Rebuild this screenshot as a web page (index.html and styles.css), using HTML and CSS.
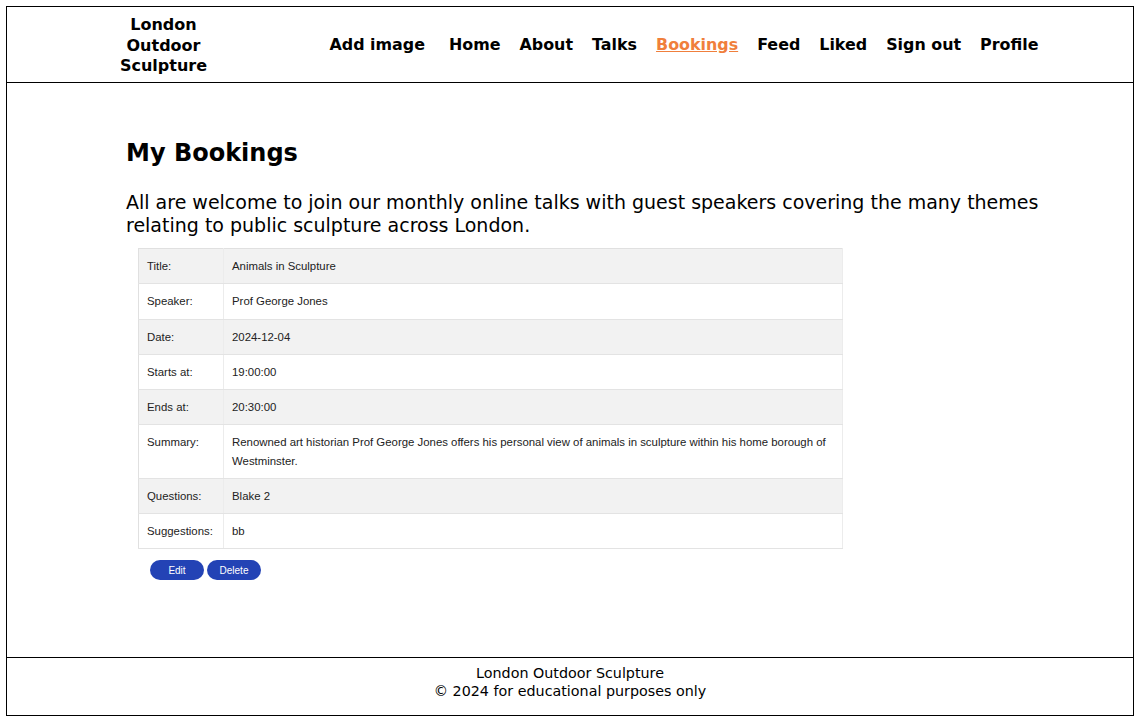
FILE: index.html
```html
<!DOCTYPE html>
<html lang="en">
<head>
<meta charset="utf-8">
<title>My Bookings</title>
<link rel="stylesheet" href="styles.css">
</head>
<body>
<div class="page">
  <header class="site-header">
    <div class="logo">London<br>Outdoor<br>Sculpture</div>
    <nav class="nav">
      <a class="nav-link first" href="#">Add image</a>
      <a class="nav-link" href="#">Home</a>
      <a class="nav-link" href="#">About</a>
      <a class="nav-link" href="#">Talks</a>
      <a class="nav-link active" href="#">Bookings</a>
      <a class="nav-link" href="#">Feed</a>
      <a class="nav-link" href="#">Liked</a>
      <a class="nav-link" href="#">Sign out</a>
      <a class="nav-link" href="#">Profile</a>
    </nav>
  </header>
  <main class="main">
    <h1 class="title">My Bookings</h1>
    <p class="intro">All are welcome to join our monthly online talks with guest speakers covering the many themes relating to public sculpture across London.</p>
    <table class="booking">
      <tr><td class="label">Title:</td><td>Animals in Sculpture</td></tr>
      <tr><td class="label">Speaker:</td><td>Prof George Jones</td></tr>
      <tr><td class="label">Date:</td><td>2024-12-04</td></tr>
      <tr><td class="label">Starts at:</td><td>19:00:00</td></tr>
      <tr><td class="label">Ends at:</td><td>20:30:00</td></tr>
      <tr><td class="label">Summary:</td><td>Renowned art historian Prof George Jones offers his personal view of animals in sculpture within his home borough of Westminster.</td></tr>
      <tr><td class="label">Questions:</td><td>Blake 2</td></tr>
      <tr><td class="label">Suggestions:</td><td>bb</td></tr>
    </table>
    <div class="actions">
      <button class="btn">Edit</button>
      <button class="btn">Delete</button>
    </div>
  </main>
  <footer class="site-footer">
    <div>London Outdoor Sculpture</div>
    <div>&copy; 2024 for educational purposes only</div>
  </footer>
</div>
</body>
</html>
```
FILE: styles.css
```css
html, body {
  margin: 0;
  padding: 0;
  background: #fff;
}
body {
  padding: 6px 10px 6px 6px;
  font-family: "DejaVu Sans", "Noto Sans", sans-serif;
  color: #000;
}
.page {
  width: 1128px;
  height: 710px;
  box-sizing: border-box;
  border: 1px solid #000;
  display: flex;
  flex-direction: column;
}
.site-header {
  display: flex;
  height: 76px;
  box-sizing: border-box;
  border-bottom: 1px solid #000;
}
.logo {
  width: 313px;
  text-align: center;
  font-weight: bold;
  font-size: 16px;
  line-height: 20.5px;
  padding-top: 8px;
}
.nav {
  display: flex;
  align-items: center;
  padding-left: 0;
  padding-bottom: 1px;
}
.nav-link {
  padding: 0 9.5px;
  font-weight: bold;
  font-size: 15.9px;
  color: #000;
  text-decoration: none;
}
.nav-link.first {
  margin-right: 5px;
}
.nav-link.active {
  color: #f07f3c;
  text-decoration: underline;
}
.main {
  flex: 1;
  padding: 0 60px 0 119px;
}
.title {
  font-size: 24px;
  font-weight: bold;
  margin: 54px 0 0 0;
  line-height: 32px;
}
.intro {
  font-size: 19px;
  line-height: 23px;
  margin: 22px 0 0 0;
}
.booking {
  margin: 11px 0 0 12px;
  width: 705px;
  border-collapse: collapse;
  font-family: "Liberation Sans", Arial, sans-serif;
  font-size: 11.4px;
  color: #222;
  border: 1px solid #e0e0e0;
  border-right: 1px solid #ececec;
}
.booking td {
  padding: 8px 8px 8px 8px;
  line-height: 18.25px;
  border-bottom: 1px solid #e3e3e3;
  vertical-align: top;
}
.booking tr:nth-child(odd) td {
  background: #f2f2f2;
}
.booking td.label {
  width: 67px;
  padding-right: 9px;
  border-right: 1px solid #ececec;
}
.actions {
  display: flex;
  gap: 3px;
  margin: 11px 0 0 24px;
}
.btn {
  width: 54px;
  height: 20px;
  border: none;
  border-radius: 10px;
  background: #2343b5;
  color: #fff;
  font-family: "Liberation Sans", Arial, sans-serif;
  font-size: 10px;
  padding: 0;
}
.site-footer {
  border-top: 1px solid #000;
  height: 58px;
  box-sizing: border-box;
  text-align: center;
  font-size: 14.3px;
  line-height: 17.5px;
  padding-top: 7px;
}
```
